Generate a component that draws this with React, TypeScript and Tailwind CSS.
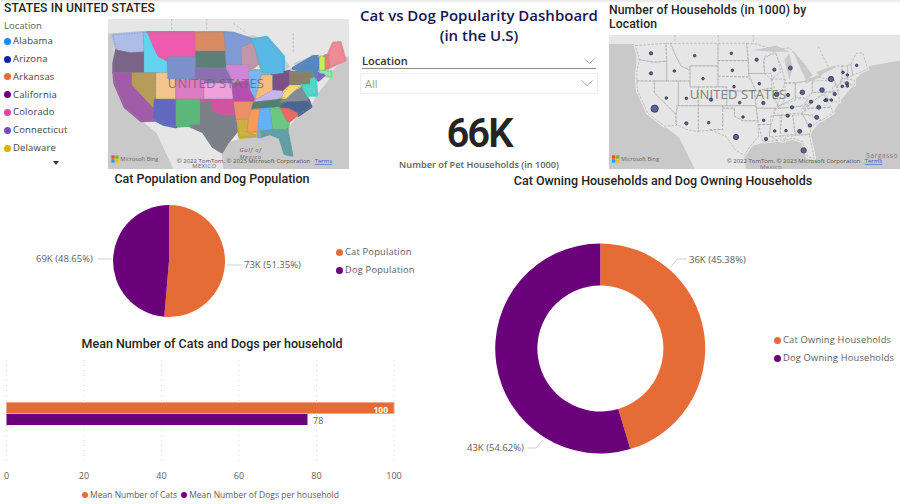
const ORANGE = '#E66C37';
const PURPLE = '#6B007B';

// map geometry is in 3x screen units, traced from the first map
const STATES: { fill: string; pts: string }[] = [
  { fill: '#aebce8', pts: '338,105 430,98 432,155 392,158 350,150' },
  { fill: '#7a6488', pts: '350,150 392,158 432,155 432,218 342,218 342,190' },
  { fill: '#62d4f0', pts: '430,98 445,98 460,140 475,170 502,183 502,218 432,218 432,155' },
  { fill: '#ee5aad', pts: '442,98 586,98 586,170 502,170 500,183 475,170 460,140' },
  { fill: '#d98c64', pts: '586,98 672,98 678,153 586,153' },
  { fill: '#5c7f78', pts: '586,153 678,153 678,205 586,203' },
  { fill: '#7c90cc', pts: '502,170 586,170 586,237 502,237' },
  { fill: '#8a70b0', pts: '586,203 678,205 700,250 612,250 612,237 586,237' },
  { fill: '#7f9ad4', pts: '672,98 700,100 760,120 722,150 725,194 678,194' },
  { fill: '#bf97a8', pts: '725,140 760,130 775,190 745,212 725,194' },
  { fill: '#cf86d8', pts: '678,194 745,194 755,240 700,250' },
  { fill: '#f3c58c', pts: '467,218 502,218 502,237 527,237 527,297 467,297' },
  { fill: '#b59c58', pts: '395,218 467,218 467,297 460,325 395,255' },
  { fill: '#a05ca8', pts: '342,218 395,218 395,255 460,325 462,360 425,362 375,320 345,250' },
  { fill: '#dc7cc4', pts: '527,237 612,237 612,297 527,297' },
  { fill: '#f0a0da', pts: '612,250 695,250 700,297 612,297' },
  { fill: '#b24fb0', pts: '695,250 745,240 765,295 760,305 700,305' },
  { fill: '#58b8e6', pts: '755,120 800,112 850,170 850,220 790,225 775,170' },
  { fill: '#7ab6f0', pts: '745,212 785,212 790,270 770,305 750,270' },
  { fill: '#f5bc80', pts: '785,225 818,225 818,280 765,298' },
  { fill: '#7c4f88', pts: '818,225 868,215 868,255 845,275 818,275' },
  { fill: '#c8b4f0', pts: '765,300 818,270 845,272 860,290 830,298 765,305' },
  { fill: '#4f8070', pts: '755,307 860,297 836,320 752,328' },
  { fill: '#808c98', pts: '860,295 880,275 905,260 925,302 836,307' },
  { fill: '#f8d878', pts: '845,290 868,255 905,255 880,275 860,295' },
  { fill: '#4a6690', pts: '836,322 860,305 925,302 932,320 895,345 865,330' },
  { fill: '#e86a62', pts: '840,325 865,325 895,340 860,370' },
  { fill: '#6cc880', pts: '810,328 840,325 865,372 860,390 818,392' },
  { fill: '#64b0fa', pts: '772,328 810,328 818,392 790,395 785,410 775,410' },
  { fill: '#f89a58', pts: '745,330 778,328 772,395 740,395' },
  { fill: '#ccb040', pts: '708,357 745,357 740,395 768,408 720,412' },
  { fill: '#ec9068', pts: '700,305 760,305 745,357 708,357' },
  { fill: '#d054a0', pts: '600,297 700,297 705,345 660,345 635,330 635,305 600,305' },
  { fill: '#7a7f88', pts: '600,305 635,305 635,330 660,345 705,345 708,395 680,430 665,455 640,440 610,395 560,373 600,373' },
  { fill: '#5cb878', pts: '527,297 600,297 600,373 527,378' },
  { fill: '#6068c0', pts: '462,297 527,297 527,380 490,372 458,355' },
  { fill: '#5f9fa8', pts: '780,392 818,388 860,388 862,400 875,465 855,460 840,412 810,400 785,408' },
  { fill: '#8a7f68', pts: '870,218 935,215 945,250 870,255' },
  { fill: '#5488c0', pts: '880,205 940,170 958,170 958,205 945,240 935,215' },
  { fill: '#50d8c8', pts: '905,255 930,255 930,235 945,232 950,285 925,285' },
  { fill: '#c8f050', pts: '958,170 975,170 975,210 958,210' },
  { fill: '#f07878', pts: '975,168 985,165 990,200 975,210' },
  { fill: '#f08a94', pts: '985,165 1000,130 1020,128 1035,180 990,200' },
  { fill: '#8fe6a8', pts: '958,210 995,215 995,232 958,220' },
  { fill: '#8060d0', pts: '953,220 975,222 955,240' },
];

const WATER = [
  '200,100 340,100 342,220 345,250 375,320 425,362 470,400 520,507 540,600 200,600',
  '1200,140 1040,170 1000,210 990,235 950,285 932,320 895,345 860,390 875,465 855,465 840,410 810,405 780,395 740,410 690,425 665,455 670,510 680,600 1200,600',
];

const LAKES = [
  '690,120 760,105 800,125 750,125',
  '785,150 800,130 810,175 800,215',
  '810,120 850,170 870,200 850,215 830,170',
  '845,215 900,195 895,205 850,225',
  '880,190 930,170 940,175 890,200',
];

const BUBBLES: [number, number, number][] = [
  [138, 160, 5], [269, 167, 4], [379, 160, 4], [455, 179, 5], [508, 209, 5], [556, 204, 6], [138, 220, 5],
  [208, 213, 4], [382, 211, 4], [294, 236, 4], [463, 251, 4], [387, 260, 4], [678, 237, 8], [651, 270, 7],
  [714, 217, 4], [727, 225, 4], [755, 196, 4], [726, 250, 5], [727, 258, 4], [712, 259, 4], [592, 277, 7],
  [515, 283, 7], [549, 285, 5], [689, 282, 5], [679, 300, 4], [664, 300, 5], [660, 301, 4], [184, 294, 4],
  [244, 295, 4], [318, 299, 5], [404, 308, 4], [475, 309, 5], [618, 305, 5], [149, 326, 11], [561, 322, 5],
  [641, 322, 6], [414, 351, 4], [548, 347, 5], [635, 352, 6], [244, 370, 5], [311, 368, 4], [476, 361, 4],
  [393, 411, 8], [615, 376, 5], [509, 393, 4], [543, 392, 4], [584, 394, 6], [483, 417, 5], [596, 451, 8],
];

const LOCATIONS = [
  { name: 'Alabama', color: '#118DFF' },
  { name: 'Arizona', color: '#12239E' },
  { name: 'Arkansas', color: ORANGE },
  { name: 'California', color: PURPLE },
  { name: 'Colorado', color: '#E044A7' },
  { name: 'Connecticut', color: '#744EC2' },
  { name: 'Delaware', color: '#D9B300' },
];

const SANS = 'Open Sans, sans-serif';
const GRID_TICKS = [0, 20, 40, 60, 80, 100];

function BingMark({ x, y }: { x: number; y: number }) {
  return (
    <g>
      <rect x={x} y={y} width="10" height="10" fill="#f25022" />
      <rect x={x + 12} y={y} width="10" height="10" fill="#7fba00" />
      <rect x={x} y={y + 12} width="10" height="10" fill="#00a4ef" />
      <rect x={x + 12} y={y + 12} width="10" height="10" fill="#ffb900" />
      <text x={x + 27} y={y + 17} fontSize="17" fill="#666" fontFamily={SANS}>Microsoft Bing</text>
    </g>
  );
}

function Credits({ x, y }: { x: number; y: number }) {
  return (
    <g fontFamily={SANS} fontSize="18">
      <text x={x} y={y} fill="#555">© 2022 TomTom, © 2023 Microsoft Corporation</text>
      <text x={x + 414} y={y} fill="#3a5bbf" textDecoration="underline">Terms</text>
    </g>
  );
}

function StatesMap() {
  return (
    <svg viewBox="324 57 723 450" className="w-[241px] h-[150px] block">
      <rect x="324" y="57" width="723" height="450" fill="#e6e6e6" />
      {WATER.map((pts) => <polygon key={pts} points={pts} fill="#c9c9c9" />)}
      {LAKES.map((pts) => <polygon key={pts} points={pts} fill="#c9c9c9" />)}
      <path d="M515 57v40M620 57v40M880 100v60M700 70l40 30" stroke="#aaa" strokeWidth="2" strokeDasharray="7 5" fill="none" />
      {/* first pass closes the small gaps between the traced shapes */}
      {STATES.map((s) => (
        <polygon key={s.pts} points={s.pts} fill={s.fill} stroke={s.fill} strokeWidth="10" strokeLinejoin="round" />
      ))}
      {STATES.map((s) => (
        <polygon key={s.pts} points={s.pts} fill={s.fill} stroke="#8b8b8b" strokeWidth="1.5" strokeDasharray="5 3" />
      ))}
      <text x="648" y="264" textAnchor="middle" fontSize="39" fill="#666" opacity="0.75" fontFamily={SANS} letterSpacing="0.5">UNITED STATES</text>
      <text x="752" y="456" textAnchor="middle" fontSize="18" fill="#666" fontFamily={SANS} fontStyle="italic" letterSpacing="2">Gulf of</text>
      <text x="752" y="476" textAnchor="middle" fontSize="18" fill="#666" fontFamily={SANS} fontStyle="italic" letterSpacing="2">Mexico</text>
      <text x="613" y="505" textAnchor="middle" fontSize="18" fill="#666" fontFamily={SANS} letterSpacing="1">MEXICO</text>
      <BingMark x={334} y={466} />
      <Credits x={530} y={489} />
    </svg>
  );
}

function HouseholdsMap() {
  return (
    <svg viewBox="12 105 873 402" className="w-[291px] h-[134px] block">
      <rect x="12" y="105" width="873" height="402" fill="#e6e6e6" />
      <g transform="translate(-247 38) scale(1 0.94)">
        {WATER.map((pts) => <polygon key={pts} points={pts} fill="#c9c9c9" />)}
        {STATES.map((s) => (
          <polygon key={s.pts} points={s.pts} fill="#e6e6e6" stroke="#e6e6e6" strokeWidth="10" strokeLinejoin="round" />
        ))}
        {STATES.map((s) => (
          <polygon key={s.pts} points={s.pts} fill="none" stroke="#a8a8a8" strokeWidth="2" strokeDasharray="8 4" />
        ))}
        {LAKES.map((pts) => <polygon key={pts} points={pts} fill="#c9c9c9" />)}
      </g>
      <path d="M210 105v25M340 105v25M445 105v25M640 140l30 60" stroke="#aaa" strokeWidth="2" strokeDasharray="7 5" fill="none" />
      <text x="399" y="298" textAnchor="middle" fontSize="39" fill="#666" opacity="0.8" fontFamily={SANS} letterSpacing="0.5">UNITED STATES</text>
      {BUBBLES.map(([cx, cy, r]) => (
        <circle key={`${cx}-${cy}`} cx={cx} cy={cy} r={r} fill="#5b6390" stroke="#23264a" strokeWidth="2" />
      ))}
      <text x="784" y="473" fontSize="19" fill="#777" fontFamily={SANS} letterSpacing="2">Sargasso</text>
      <text x="465" y="506" fontSize="18" fill="#777" fontFamily={SANS} letterSpacing="1">Mexico</text>
      <BingMark x={21} y={466} />
      <Credits x={365} y={489} />
    </svg>
  );
}

function Chevron({ className }: { className: string }) {
  return (
    <svg viewBox="0 0 12 6" className={className} fill="none" stroke="#8a8a8a" strokeWidth="0.8">
      <path d="M0.5 0.5 6 5.5 11.5 0.5" />
    </svg>
  );
}

function LegendItem({ label, color }: { label: string; color: string }) {
  return (
    <div className="flex items-center gap-[2px] h-[18px] text-[9.3px] tracking-[0.2px] text-[#605E5C] whitespace-nowrap">
      <span className="w-[7px] h-[7px] rounded-full shrink-0" style={{ backgroundColor: color }} />
      {label}
    </div>
  );
}

function PieChart() {
  return (
    <svg viewBox="0 0 330 130" className="w-[330px] h-[130px] block shrink-0">
      <path d="M169 71L169 15A56 56 0 1 1 164.3 126.8Z" fill={ORANGE} />
      <path d="M169 71L164.3 126.8A56 56 0 0 1 169 15Z" fill={PURPLE} />
      <path d="M98 69h14M227 75h14" stroke="#d0d0d0" strokeWidth="1" />
      <g fontFamily={SANS} fontSize="9.5" fill="#605E5C">
        <text x="36" y="72">69K (48.65%)</text>
        <text x="244" y="78">73K (51.35%)</text>
      </g>
    </svg>
  );
}

function DonutChart() {
  return (
    <svg viewBox="0 0 330 212" className="w-[330px] h-[212px] block shrink-0">
      <path d="M170.3 0.5A105 105 0 0 1 200.3 206.1L188.3 165.9A63 63 0 0 0 170.3 42.5Z" fill={ORANGE} />
      <path d="M200.3 206.1A105 105 0 1 1 170.3 0.5V42.5A63 63 0 1 0 188.3 165.9Z" fill={PURPLE} />
      <path d="M241 24l6-8h10M113 197l-7 8H98" stroke="#d0d0d0" strokeWidth="1" fill="none" />
      <g fontFamily={SANS} fontSize="9.5" fill="#605E5C">
        <text x="259" y="19.5">36K (45.38%)</text>
        <text x="37" y="208">43K (54.62%)</text>
      </g>
    </svg>
  );
}

function BarChart() {
  return (
    <svg viewBox="0 0 410 122" className="w-[410px] h-[122px] block">
      {GRID_TICKS.map((t) => {
        const x = 6.5 + t * 3.875;
        return (
          <g key={t}>
            <line x1={x} x2={x} y1="0" y2="105" stroke="#d4d4d4" strokeDasharray="1 4" />
            <text x={x} y="119" textAnchor="middle" fontSize="9" fill="#605E5C" fontFamily={SANS}>{t}</text>
          </g>
        );
      })}
      <rect x="6.5" y="42.5" width="387.5" height="11" fill={ORANGE} stroke="#f2a988" />
      <rect x="6.5" y="54" width="301" height="11" fill={PURPLE} />
      <text x="388" y="52.5" textAnchor="end" fontSize="8.5" fontWeight="700" fill="#fff" fontFamily={SANS}>100</text>
      <text x="313" y="64" fontSize="9" fill="#605E5C" fontFamily={SANS}>78</text>
    </svg>
  );
}

export default function App() {
  return (
    <div className="w-[900px] h-[504px] overflow-hidden bg-white flex flex-col font-['Open_Sans',sans-serif]">
      <div className="h-[3px] shrink-0 bg-gradient-to-b from-[#e6e6e6] to-white" />
      <div className="flex h-[166px] shrink-0">
        {/* states slicer and filled map */}
        <div className="w-[349px] shrink-0 flex flex-col">
          <h2 className="pl-[4px] h-[16px] text-[12.1px] leading-[10px] font-medium tracking-[0.1px] text-[#252423] font-['Roboto',sans-serif]">
            STATES IN UNITED STATES
          </h2>
          <div className="flex">
            <div className="w-[108px] shrink-0 pl-[4px]">
              <div className="h-[13.5px] text-[9.5px] leading-[14px] text-[#605E5C]">Location</div>
              {LOCATIONS.map((l) => (
                <div key={l.name} className="h-[17.8px] flex items-center gap-[2px] text-[9.5px] tracking-[0.15px] text-[#444]">
                  <span className="w-[7px] h-[7px] rounded-full" style={{ backgroundColor: l.color }} />
                  {l.name}
                </div>
              ))}
              <div className="ml-[49px] mt-[4px] w-0 h-0 border-x-[3.5px] border-x-transparent border-t-[4px] border-t-[#333]" />
            </div>
            <StatesMap />
          </div>
        </div>

        {/* title, location filter, card */}
        <div className="w-[260px] shrink-0 flex flex-col items-center">
          <h1 className="mt-[2px] text-[15px] leading-[20px] font-semibold text-center text-[#14184f] whitespace-nowrap">
            Cat vs Dog Popularity Dashboard<br />(in the U.S)
          </h1>
          <div className="mt-[9px] w-[234px] h-[15px] border-b border-[#8c8c8c] flex items-center justify-between">
            <span className="text-[11px] font-semibold text-[#333]">Location</span>
            <Chevron className="w-[11px] h-[6px] mr-[1px]" />
          </div>
          <div className="mt-[4px] w-[238px] h-[24px] border border-[#eeeeee] flex items-center justify-between pl-[4px] pr-[4px]">
            <span className="text-[11px] text-[#9a9a9a] pt-[2px]">All</span>
            <Chevron className="w-[12px] h-[6px]" />
          </div>
          <div className="mt-[20px] text-[40px] leading-[40px] font-semibold tracking-[-2px] text-[#252423] font-['Roboto',sans-serif]">66K</div>
          <div className="mt-[5px] text-[9.2px] leading-[12px] text-[#605E5C] font-semibold whitespace-nowrap">
            Number of Pet Households (in 1000)
          </div>
        </div>

        {/* households bubble map */}
        <div className="flex-1 min-w-0 flex flex-col">
          <h2 className="h-[32px] w-[240px] text-[12.2px] leading-[14px] font-medium tracking-[0.1px] text-[#252423] font-['Roboto',sans-serif]">
            Number of Households (in 1000) by Location
          </h2>
          <HouseholdsMap />
        </div>
      </div>

      <div className="flex-1 flex min-h-0">
        <div className="w-[430px] shrink-0 flex flex-col">
          <h3 className="w-[424px] mt-[2px] h-[19px] text-center text-[12.5px] leading-[16px] font-medium text-[#252423] font-['Roboto',sans-serif]">
            Cat Population and Dog Population
          </h3>
          <div className="flex items-center h-[130px]">
            <PieChart />
            <div className="ml-[6px] mt-[12px]">
              <LegendItem label="Cat Population" color={ORANGE} />
              <LegendItem label="Dog Population" color={PURPLE} />
            </div>
          </div>
          <h3 className="w-[424px] mt-[16px] h-[16px] text-center text-[12.5px] leading-[16px] font-medium text-[#252423] font-['Roboto',sans-serif]">
            Mean Number of Cats and Dogs per household
          </h3>
          <div className="mt-[8px]">
            <BarChart />
          </div>
          <div className="flex justify-center w-[421px] gap-[4px] text-[8.5px] leading-[12px] mt-[7px]">
            <div className="flex items-center gap-[2px] text-[#605E5C] whitespace-nowrap">
              <span className="w-[6px] h-[6px] rounded-full bg-[#E66C37]" />Mean Number of Cats
            </div>
            <div className="flex items-center gap-[2px] text-[#605E5C] whitespace-nowrap">
              <span className="w-[6px] h-[6px] rounded-full bg-[#6B007B]" />Mean Number of Dogs per household
            </div>
          </div>
        </div>

        <div className="flex-1 min-w-0 flex flex-col">
          <h3 className="w-[466px] mt-[2px] text-center text-[12.5px] leading-[20px] font-medium text-[#252423] font-['Roboto',sans-serif] whitespace-nowrap">
            Cat Owning Households and Dog Owning Households
          </h3>
          <div className="flex items-start mt-[52px]">
            <DonutChart />
            <div className="ml-[14px] mt-[88px]">
              <LegendItem label="Cat Owning Households" color={ORANGE} />
              <LegendItem label="Dog Owning Households" color={PURPLE} />
            </div>
          </div>
        </div>
      </div>
    </div>
  );
}
